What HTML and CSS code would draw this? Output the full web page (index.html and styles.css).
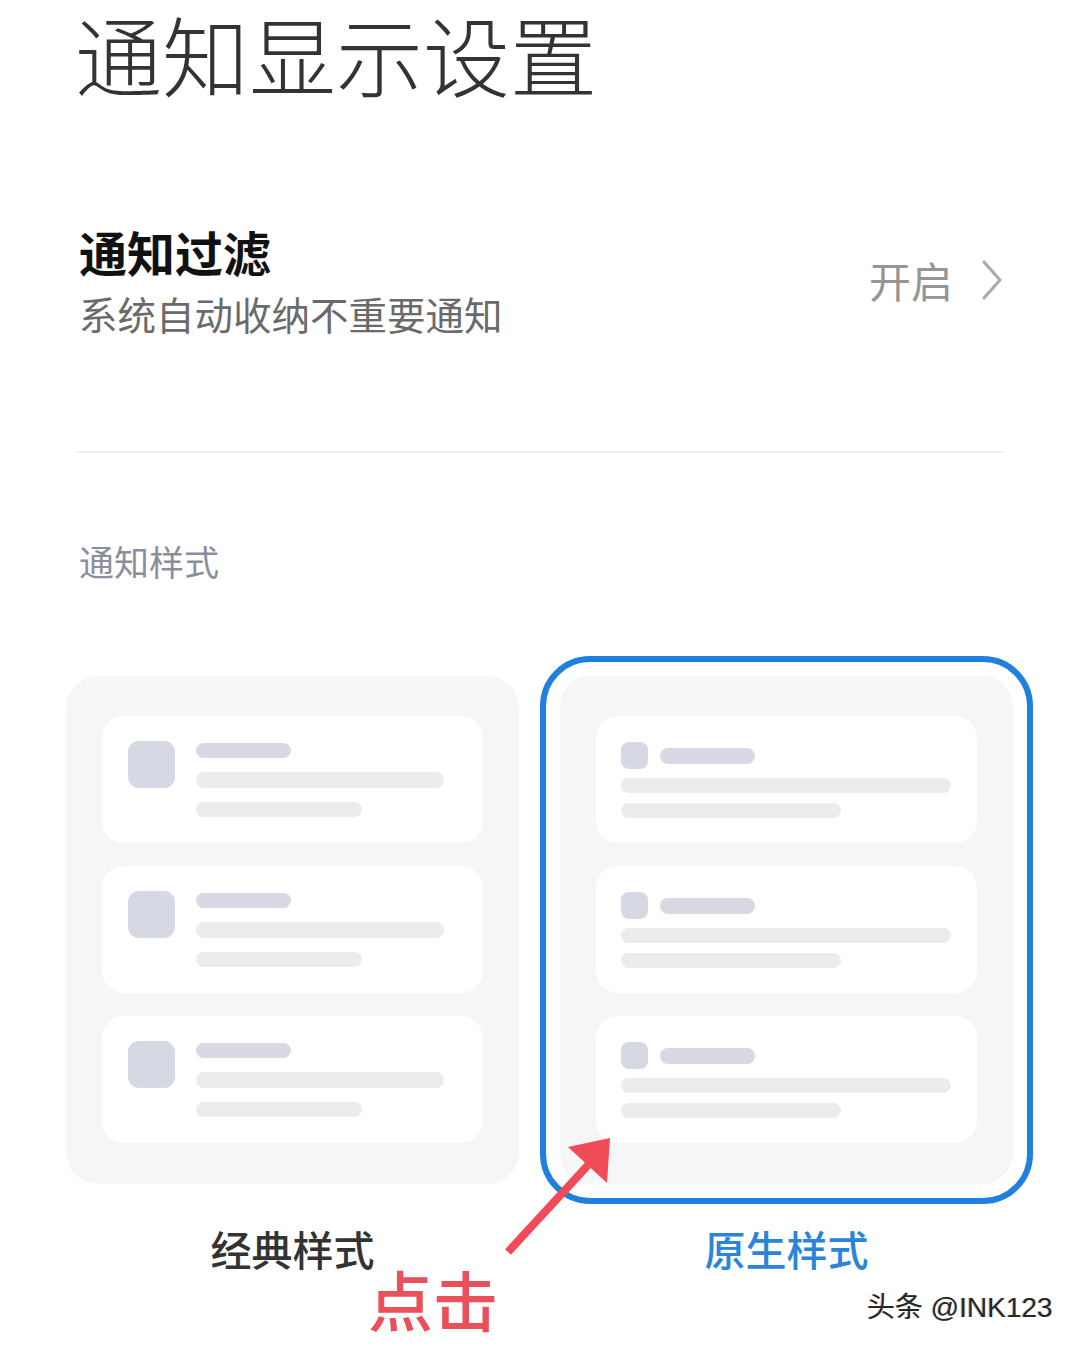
FILE: index.html
```html
<!DOCTYPE html>
<html lang="zh-CN">
<head>
    <meta charset="UTF-8">
    <title>通知显示设置</title>
    <link rel="stylesheet" href="styles.css">
</head>
<body>
<div class="page">
    <h1 class="page-title">通知显示设置</h1>

    <div class="filter-row">
        <div class="filter-text">
            <div class="filter-title">通知过滤</div>
            <div class="filter-desc">系统自动收纳不重要通知</div>
        </div>
        <div class="filter-value">
            <span>开启</span>
            <svg class="chevron" width="22" height="40" viewBox="0 0 22 40">
                <path d="M3 2 L19 20 L3 38" fill="none" stroke="#a9a9a9" stroke-width="3" stroke-linecap="round" stroke-linejoin="round"/>
            </svg>
        </div>
    </div>

    <div class="section-label">通知样式</div>

    <div class="style-row">
        <!-- classic style preview -->
        <div class="style-card">
            <div class="notice classic">
                <div class="notice-icon"></div>
                <div class="notice-lines">
                    <div class="bar bar-title"></div>
                    <div class="bar bar-long"></div>
                    <div class="bar bar-short"></div>
                </div>
            </div>
            <div class="notice classic">
                <div class="notice-icon"></div>
                <div class="notice-lines">
                    <div class="bar bar-title"></div>
                    <div class="bar bar-long"></div>
                    <div class="bar bar-short"></div>
                </div>
            </div>
            <div class="notice classic">
                <div class="notice-icon"></div>
                <div class="notice-lines">
                    <div class="bar bar-title"></div>
                    <div class="bar bar-long"></div>
                    <div class="bar bar-short"></div>
                </div>
            </div>
        </div>

        <!-- native style preview (selected) -->
        <div class="style-card selected">
            <div class="notice native">
                <div class="notice-head">
                    <div class="notice-dot"></div>
                    <div class="bar bar-title"></div>
                </div>
                <div class="bar bar-wide"></div>
                <div class="bar bar-mid"></div>
            </div>
            <div class="notice native">
                <div class="notice-head">
                    <div class="notice-dot"></div>
                    <div class="bar bar-title"></div>
                </div>
                <div class="bar bar-wide"></div>
                <div class="bar bar-mid"></div>
            </div>
            <div class="notice native">
                <div class="notice-head">
                    <div class="notice-dot"></div>
                    <div class="bar bar-title"></div>
                </div>
                <div class="bar bar-wide"></div>
                <div class="bar bar-mid"></div>
            </div>
        </div>
    </div>

    <div class="label-row">
        <div class="style-label">经典样式</div>
        <div class="style-label active">原生样式</div>
    </div>

    <!-- red annotation over the screenshot -->
    <svg class="hint-arrow" width="130" height="140" viewBox="0 0 130 140">
        <line x1="8" y1="122" x2="90" y2="33" stroke="#f04b56" stroke-width="8"/>
        <polygon points="110,8 68,17 107,53" fill="#f04b56"/>
    </svg>
    <div class="hint-text">点击</div>

    <div class="watermark">头条 @INK123</div>
</div>
</body>
</html>
```

FILE: styles.css
```css
body {
    margin: 0;
    background-color: #fff;
    font-family: "Noto Sans CJK SC", "Liberation Sans", sans-serif;
}

.page {
    position: relative;
    width: 1080px;
    height: 1349px;
    overflow: hidden;
}

.page-title {
    margin: 3px 0 0 75px;
    font-size: 87px;
    line-height: 100px;
    font-weight: 300;
    color: #333;
}

/* filter setting row */
.filter-row {
    display: flex;
    align-items: center;
    justify-content: space-between;
    margin: 124px 77px 0 77px;
    padding-bottom: 119px;
    border-bottom: 2px solid #eeeeee;
}

.filter-title {
    margin-left: 2px;
    font-size: 48px;
    line-height: 48px;
    font-weight: 700;
    color: #111;
}

.filter-desc {
    margin-top: 19px;
    margin-left: 2px;
    font-size: 38.5px;
    line-height: 38px;
    color: #6a6a6a;
}

.filter-value {
    display: flex;
    align-items: center;
    gap: 28px;
    font-size: 42px;
    line-height: 42px;
    color: #959595;
}

.chevron {
    display: block;
}

.section-label {
    margin: 90px 0 0 79px;
    font-size: 35px;
    line-height: 35px;
    color: #8a8e9e;
}

/* style previews */
.style-row {
    display: flex;
    gap: 41px;
    margin-top: 98px;
    padding-left: 66px;
}

.style-card {
    width: 453px;
    box-sizing: border-box;
    padding: 40px 36px 41px 36px;
    background-color: #f5f6f8;
    border-radius: 32px;
    display: flex;
    flex-direction: column;
    gap: 23px;
}

.style-card.selected {
    outline: 6px solid #1f80e0;
    outline-offset: 14px;
    border-radius: 30px;
}

.notice {
    height: 127px;
    box-sizing: border-box;
    background-color: #fff;
    border-radius: 22px;
}

.notice.classic {
    display: flex;
    gap: 21px;
    padding: 25px 0 0 26px;
}

.notice-icon {
    width: 47px;
    height: 47px;
    border-radius: 11px;
    background-color: #d6d8e4;
}

.notice-lines {
    display: flex;
    flex-direction: column;
    padding-top: 2px;
}

.bar {
    height: 15px;
    border-radius: 8px;
    background-color: #ececef;
}

.bar-title {
    width: 95px;
    background-color: #d8d9e5;
}

.notice-lines .bar-long {
    width: 248px;
    margin-top: 14px;
    height: 16px;
}

.notice-lines .bar-short {
    width: 166px;
    margin-top: 14px;
}

.notice.native {
    padding: 26px 0 0 25px;
}

.notice-head {
    display: flex;
    align-items: center;
    gap: 12px;
}

.notice-dot {
    width: 27px;
    height: 27px;
    border-radius: 8px;
    background-color: #d6d8e4;
}

.notice-head .bar-title {
    height: 16px;
}

.bar-wide {
    width: 330px;
    margin-top: 9px;
}

.bar-mid {
    width: 220px;
    margin-top: 10px;
}

/* labels under the previews */
.label-row {
    display: flex;
    gap: 41px;
    margin-top: 44px;
    padding-left: 66px;
}

.style-label {
    width: 453px;
    text-align: center;
    font-size: 41px;
    line-height: 41px;
    font-weight: 500;
    color: #333;
}

.style-label.active {
    color: #2a84d8;
}

/* annotation overlay */
.hint-arrow {
    position: absolute;
    left: 500px;
    top: 1130px;
}

.hint-text {
    position: absolute;
    left: 368px;
    top: 1266px;
    font-size: 65px;
    line-height: 65px;
    font-weight: 500;
    color: #e9505a;
}

.watermark {
    position: absolute;
    left: 867px;
    top: 1292px;
    font-family: "Liberation Sans", "Noto Sans CJK SC", sans-serif;
    font-size: 28px;
    line-height: 32px;
    color: #262626;
    text-shadow: 1px 1px 0 #fff, -1px 0 0 #bbb;
}
```
